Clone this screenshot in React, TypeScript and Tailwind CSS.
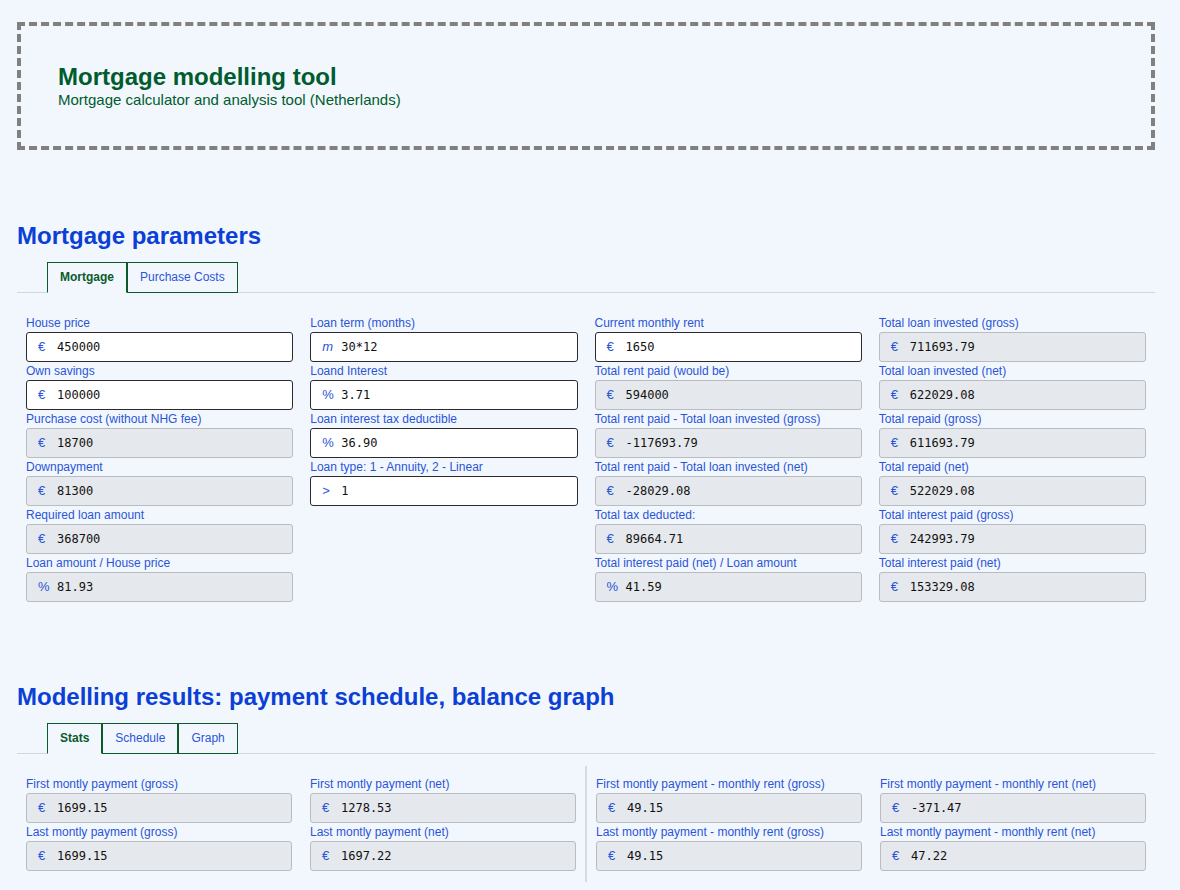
import React from 'react';

type Field = {
  label: string;
  value: string;
  prefix?: string;
  editable?: boolean;
  italic?: boolean;
};

const mortgageColumns: Field[][] = [
  [
    { label: 'House price', value: '450000', prefix: '€', editable: true },
    { label: 'Own savings', value: '100000', prefix: '€', editable: true },
    { label: 'Purchase cost (without NHG fee)', value: '18700', prefix: '€' },
    { label: 'Downpayment', value: '81300', prefix: '€' },
    { label: 'Required loan amount', value: '368700', prefix: '€' },
    { label: 'Loan amount / House price', value: '81.93', prefix: '%' },
  ],
  [
    { label: 'Loan term (months)', value: '30*12', prefix: 'm', editable: true, italic: true },
    { label: 'Loand Interest', value: '3.71', prefix: '%', editable: true },
    { label: 'Loan interest tax deductible', value: '36.90', prefix: '%', editable: true },
    { label: 'Loan type: 1 - Annuity, 2 - Linear', value: '1', prefix: '>', editable: true },
  ],
  [
    { label: 'Current monthly rent', value: '1650', prefix: '€', editable: true },
    { label: 'Total rent paid (would be)', value: '594000', prefix: '€' },
    { label: 'Total rent paid - Total loan invested (gross)', value: '-117693.79', prefix: '€' },
    { label: 'Total rent paid - Total loan invested (net)', value: '-28029.08', prefix: '€' },
    { label: 'Total tax deducted:', value: '89664.71', prefix: '€' },
    { label: 'Total interest paid (net) / Loan amount', value: '41.59', prefix: '%' },
  ],
  [
    { label: 'Total loan invested (gross)', value: '711693.79', prefix: '€' },
    { label: 'Total loan invested (net)', value: '622029.08', prefix: '€' },
    { label: 'Total repaid (gross)', value: '611693.79', prefix: '€' },
    { label: 'Total repaid (net)', value: '522029.08', prefix: '€' },
    { label: 'Total interest paid (gross)', value: '242993.79', prefix: '€' },
    { label: 'Total interest paid (net)', value: '153329.08', prefix: '€' },
  ],
];

const statsLeft: Field[][] = [
  [
    { label: 'First montly payment (gross)', value: '1699.15', prefix: '€' },
    { label: 'Last montly payment (gross)', value: '1699.15', prefix: '€' },
  ],
  [
    { label: 'First montly payment (net)', value: '1278.53', prefix: '€' },
    { label: 'Last montly payment (net)', value: '1697.22', prefix: '€' },
  ],
];

const statsRight: Field[][] = [
  [
    { label: 'First montly payment - monthly rent (gross)', value: '49.15', prefix: '€' },
    { label: 'Last montly payment - monthly rent (gross)', value: '49.15', prefix: '€' },
  ],
  [
    { label: 'First montly payment - monthly rent (net)', value: '-371.47', prefix: '€' },
    { label: 'Last montly payment - monthly rent (net)', value: '47.22', prefix: '€' },
  ],
];

function InputField({ field }: { field: Field }) {
  return (
    <div className="mb-[1px]">
      <div className="h-[17px] leading-[17px] text-[12px] text-[#2a55d8] whitespace-nowrap">
        {field.label}
      </div>
      <div
        className={`h-[30px] flex items-center rounded-[3px] border pl-[11px] ${
          field.editable ? 'bg-white border-[#2b2b2b]' : 'bg-[#e5e8ec] border-[#b9bcc0]'
        }`}
      >
        <span
          className={`w-[19px] text-[13px] text-[#2a55d8] ${
            field.italic ? 'italic' : ''
          }`}
        >
          {field.prefix}
        </span>
        <span className="text-[12px] text-[#111] font-['DejaVu_Sans_Mono',monospace]">{field.value}</span>
      </div>
    </div>
  );
}

function Tabs({ tabs, active }: { tabs: string[]; active: string }) {
  return (
    <div className="flex border-b border-[#d3d6db] pl-[30px]">
      {tabs.map((t) => (
        <div
          key={t}
          className={`h-[31px] -mb-px flex items-center pb-[2px] px-[12px] text-[12px] border border-[#0b5a2c] ${
            t === active
              ? 'font-bold text-[#0b5a2c] border-b-[#f2f7fd] bg-[#f2f7fd]'
              : 'text-[#2a55d8]'
          }`}
        >
          {t}
        </div>
      ))}
    </div>
  );
}

function Column({ fields }: { fields: Field[] }) {
  return (
    <div className="flex flex-col">
      {fields.map((f) => (
        <InputField key={f.label} field={f} />
      ))}
    </div>
  );
}

export default function App() {
  return (
    <div className="min-h-screen bg-[#f2f7fd] pt-[22px] pb-[20px] font-['Liberation_Sans',Arial,sans-serif]">
      <div className="ml-[17px] w-[1138px]">
        {/* Header */}
        <header className="h-[128px] border-4 border-dashed border-[#808080] flex flex-col justify-center pl-[37px]">
          <h1 className="text-[24px] leading-[28px] font-bold text-[#005c2e]">Mortgage modelling tool</h1>
          <p className="text-[15px] leading-[18px] text-[#005c2e]">Mortgage calculator and analysis tool (Netherlands)</p>
        </header>

        {/* Parameters */}
        <section className="mt-[72px]">
          <h2 className="text-[24px] leading-[28px] font-bold text-[#0b3fd6] mb-[12px]">Mortgage parameters</h2>
          <Tabs tabs={['Mortgage', 'Purchase Costs']} active="Mortgage" />
          <div className="grid grid-cols-4 gap-x-[17px] px-[9px] pt-[22px]">
            {mortgageColumns.map((col, i) => (
              <Column key={i} fields={col} />
            ))}
          </div>
        </section>

        {/* Results */}
        <section className="mt-[80px]">
          <h2 className="text-[24px] leading-[28px] font-bold text-[#0b3fd6] mb-[12px]">
            Modelling results: payment schedule, balance graph
          </h2>
          <Tabs tabs={['Stats', 'Schedule', 'Graph']} active="Stats" />
          <div className="flex px-[9px] mt-[12px]">
            <div className="flex-1 grid grid-cols-2 gap-x-[18px] py-[10px]">
              {statsLeft.map((col, i) => (
                <Column key={i} fields={col} />
              ))}
            </div>
            <div className="w-[2px] mx-[9px] bg-[#d6d9dd]" />
            <div className="flex-1 grid grid-cols-2 gap-x-[18px] py-[10px]">
              {statsRight.map((col, i) => (
                <Column key={i} fields={col} />
              ))}
            </div>
          </div>
        </section>
      </div>
    </div>
  );
}
